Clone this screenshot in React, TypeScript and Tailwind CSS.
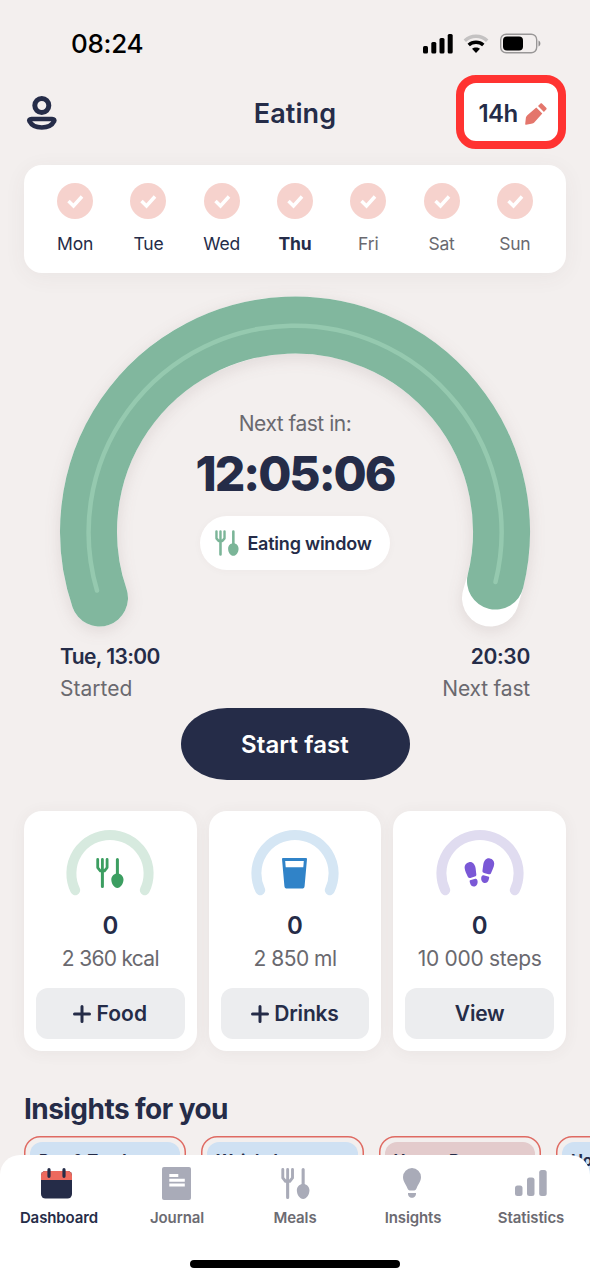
import React from "react";

const days = ["Mon", "Tue", "Wed", "Thu", "Fri", "Sat", "Sun"];

function Utensils({ className }: { className: string }) {
  return (
    <svg viewBox="0 0 28 30" className={className} fill="none" stroke="currentColor" strokeLinecap="round" strokeLinejoin="round">
      <path d="M1.700 1.400V9.600L4.300 12.800H8.500L11.100 9.600V1.400M6.400 1.400V12" strokeWidth="2.800" />
      <path d="M6.400 12v16.500M21.400 1.500V18" strokeWidth="3" />
      <path d="M21.400 15.400c3.300 0 6.100 2.600 6.100 6.200 0 4.200-2.800 8.400-6.100 8.400s-6.100-4.200-6.100-8.400c0-3.600 2.800-6.200 6.100-6.200z" fill="currentColor" stroke="none" />
    </svg>
  );
}

function Glass() {
  return (
    <svg viewBox="0 0 25 31" className="h-[31px] w-[25px]">
      <path d="M1 0h23a1 1 0 0 1 1 1.1L22.6 28a2.8 2.8 0 0 1-2.8 2.6H5.2A2.8 2.8 0 0 1 2.4 28L0 1.1A1 1 0 0 1 1 0z" fill="#3083c8" />
      <path d="M3.2 3h18.6l-.5 6.2H3.7z" fill="#fff" />
    </svg>
  );
}

function Steps() {
  return (
    <svg viewBox="0 0 31 30" className="h-[30px] w-[31px]" fill="#7a58d6">
      <path d="M5 4.2c3.4-.8 6 2 6.6 6 .3 2.300.4 3.800.7 5.800.2 1.500-.3 2.200-1.500 2.600l-4.400 1.300c-1.400.4-2.200 0-2.700-1.300C2.600 15.800.9 13.300.6 9.800.4 7 2.200 4.900 5 4.200z" />
      <path d="M6 22.300l5.300-1.600c1.300-.3 2.100.7 2.300 2.600.3 2.400-.8 4.600-2.900 5.200-2.200.5-3.800-.7-4.600-3.200-.4-1.300-.7-2.500-.1-3z" />
      <path d="M25.800.4c-3.400-.7-5.900 2.200-6.500 6.100-.3 2.300-.5 3.900-.8 5.900-.2 1.400.2 2.200 1.500 2.500l4.600 1.300c1.300.3 2.100-.1 2.600-1.400 1.100-3 2.700-5.500 3-8.900.2-2.900-1.600-5-4.400-5.500z" />
      <path d="M24.900 18.700l-5.400-1.500c-1.300-.3-2 .7-2.300 2.500-.3 2.500.8 4.600 2.900 5.200 2.200.5 3.800-.8 4.600-3.200.4-1.300.8-2.500.2-3z" />
    </svg>
  );
}

function Plus() {
  return (
    <svg viewBox="0 0 18 18" className="h-[18px] w-[18px]" stroke="currentColor" strokeWidth="3" strokeLinecap="round">
      <path d="M9 1.500v15M1.500 9h15" />
    </svg>
  );
}

interface StatProps {
  arc: string;
  goal: string;
  action: string;
  plus?: boolean;
  goalClass: string;
  actionClass: string;
  children: React.ReactNode;
}

function StatCard({ arc, goal, action, plus, goalClass, actionClass, children }: StatProps) {
  return (
    <section className="flex h-[240px] flex-col items-center rounded-[18px] bg-white px-3 pt-[18px] shadow-[0_2px_16px_rgba(90,60,60,0.06)]">
      <div className="grid h-[68px] w-[90px] place-items-center">
        <svg viewBox="0 0 90 68" className="col-start-1 row-start-1 h-[68px] w-[90px]" fill="none">
          <path d="M10.200 61.200A38.600 38.600 0 1 1 79.800 61.200" stroke={arc} strokeWidth="10" strokeLinecap="round" />
        </svg>
        <div className="col-start-1 row-start-1 pt-[20px]">{children}</div>
      </div>
      <p className="mt-[15px] h-[28px] text-[24px] leading-[28px] font-semibold">0</p>
      <p className={"mt-[5px] h-[28px] text-[21px] leading-[28px] whitespace-nowrap text-[#6a696f] " + goalClass}>{goal}</p>
      <button className="mt-[15px] flex h-[51px] w-full items-center justify-center gap-[5px] rounded-[12px] bg-[#ecedef]">
        {plus && <Plus />}
        <span className={"text-[21px] leading-[28px] font-semibold " + actionClass}>{action}</span>
      </button>
    </section>
  );
}

function FastingDial() {
  return (
    <section className="grid h-[350px] justify-items-center">
      <svg viewBox="0 0 590 350" className="col-start-1 row-start-1 h-[350px] w-[590px] drop-shadow-[0_4px_8px_rgba(90,60,60,0.12)]" fill="none" strokeLinecap="round">
        <path d="M99.500 315A206.500 206.500 0 1 1 490.500 315" stroke="#fff" strokeWidth="57" />
        <path d="M99.500 315A206.500 206.500 0 1 1 495.500 298" stroke="#81b79e" strokeWidth="57" />
        <path d="M97 307.500A206.500 206.500 0 1 1 495.500 299" stroke="#95c9af" strokeWidth="4.500" />
      </svg>
      <div className="col-start-1 row-start-1 flex flex-col items-center pt-[127px]">
        <p className="h-[28px] text-[21px] leading-[28px] tracking-[-0.500px] text-[#6a696f]">Next fast in:</p>
        <p className="mt-[8px] h-[56px] text-[48px] leading-[56px] font-extrabold tracking-[-2px]">12:05:06</p>
        <div className="mt-[14px] flex h-[54px] w-[190px] items-center justify-center rounded-full bg-white pr-[3px] shadow-[0_1px_8px_rgba(90,60,60,0.03)]">
          <Utensils className="h-[26px] w-[24px] text-[#7bb598]" />
          <span className="ml-[8px] text-[18px] font-semibold tracking-[-0.220px]">Eating window</span>
        </div>
      </div>
    </section>
  );
}

const insights = [
  { title: "Day & Track", bg: "bg-[#cfe1f3]", tracking: "" },
  { title: "Weight l", bg: "bg-[#cfe1f3]", tracking: "-tracking-[0.300px]" },
  { title: "How to Boost", bg: "bg-[#e3cbcc]", tracking: "tracking-[-0.400px]" },
  { title: "How", bg: "bg-[#cfe1f3]", tracking: "" },
];

function Tab({ label, active, children }: { label: string; active?: boolean; children: React.ReactNode }) {
  return (
    <a className={"flex flex-col items-center text-[15px] font-semibold tracking-[-0.100px] " + (active ? "text-[#252c48]" : "text-[#6c6b72]")}>
      <span className="flex h-[34px] items-center text-[#a9abb8]">{children}</span>
      <span className="mt-[8px] leading-[20px]">{label}</span>
    </a>
  );
}

export default function App() {
  return (
    <main className="relative h-[1280px] w-[590px] overflow-hidden bg-[#f3efee] font-['Inter',sans-serif] text-[#252c48]">
      <div className="flex h-[75px] items-center justify-between pt-[12px] pr-[49px] pl-[71px] text-black">
        <time className="text-[26px] leading-[32px] font-medium tracking-[-0.300px]">08:24</time>
        <svg viewBox="0 0 118 22" className="h-[22px] w-[118px]">
          <g>
            <rect x="0" y="13" width="5" height="7.500" rx="1.500" />
            <rect x="8.300" y="9" width="5" height="11.500" rx="1.500" />
            <rect x="16.500" y="5" width="5" height="15.500" rx="1.500" />
            <rect x="24.700" y="1" width="5" height="19.500" rx="1.500" />
          </g>
          <g fill="none" strokeWidth="3.500">
            <path d="M41.800 7.700a16.500 16.500 0 0 1 22.400 0" stroke="#c4c2c2" />
            <path d="M45.700 12a11 11 0 0 1 14.600 0" stroke="#000" />
          </g>
          <path d="M53 20l-4-4.200c2.300-1.800 5.700-1.800 8 0z" />
          <rect x="77.700" y="1.200" width="36" height="18.600" rx="5.500" fill="none" stroke="#999797" strokeWidth="1.400" />
          <rect x="80" y="3.500" width="20" height="14" rx="4" />
          <path d="M115.500 7.500c2.500 1 2.500 5 0 6z" fill="#8f8d8d" />
        </svg>
      </div>

      <header className="grid h-[74px] grid-cols-[110px_1fr_110px] items-center px-[24px]">
        <svg viewBox="0 0 36 36" className="mt-[3px] h-[36px] w-[36px]" fill="none" stroke="currentColor" strokeWidth="5">
          <circle cx="17.800" cy="9.500" r="7" />
          <path d="M7.500 23h20.600c2 0 2.700 1 2 2.300-2 4-6.700 6.200-12.300 6.200S7.500 29.300 5.500 25.300c-.7-1.300 0-2.300 2-2.300z" strokeWidth="4.600" />
        </svg>
        <h1 className="pt-[5px] text-center text-[27px] font-semibold tracking-[0.100px]">Eating</h1>
        <button className="flex h-[74px] w-[110px] items-center justify-center gap-[7px] rounded-[20px] border-[8px] border-[#ff3331] bg-white pt-[4px] pl-[3px]">
          <span className="text-[24px] font-semibold tracking-[-0.600px]">14h</span>
          <svg viewBox="0 0 22 22" className="h-[22px] w-[22px]" fill="#e4766c">
            <path d="M11.300 4.600l6 6-7.600 8.300c-.9 1-2 1.500-3.400 1.800L1 21.700c-.6.1-.9-.2-.8-.8L.8 15.400c.2-1.400.8-2.300 1.800-3.300z" />
            <path d="M13 3L15.300.700c.6-.6 1.300-.6 1.900 0l4 4c.6.6.6 1.300 0 1.900L18.900 8.900z" />
          </svg>
        </button>
      </header>

      <section className="mx-[24px] mt-[16px] grid h-[108px] grid-cols-7 rounded-[18px] bg-white px-[14.500px] pt-[18px] shadow-[0_4px_22px_rgba(90,60,60,0.06)]">
        {days.map((day, i) => (
          <div key={day} className="flex flex-col items-center">
            <svg viewBox="0 0 36 36" className="h-[36px] w-[36px]">
              <circle cx="18" cy="18" r="18" fill="#f6d2cd" />
              <path d="M11.500 18l5 5L25 13.500" fill="none" stroke="#fff" strokeWidth="3.500" />
            </svg>
            <span className={"mt-[12px] text-[17.500px] leading-[25px] tracking-[-0.200px] " + (i === 3 ? "font-bold" : i > 3 ? "text-[#6a696f]" : "")}>{day}</span>
          </div>
        ))}
      </section>

      <div className="mt-[10px]">
        <FastingDial />
      </div>

      <div className="mt-[8px] flex h-[67px] justify-between px-[60px] text-[21px] leading-[32px]">
        <div>
          <p className="font-semibold tracking-[-0.600px]">Tue, 13:00</p>
          <p className="text-[#6a696f]">Started</p>
        </div>
        <div className="text-right">
          <p className="font-semibold tracking-[-0.300px]">20:30</p>
          <p className="tracking-[-0.200px] text-[#6a696f]">Next fast</p>
        </div>
      </div>

      <button className="mx-auto block h-[72px] w-[229px] rounded-[46px/36px] bg-[#252c48] pt-[1px] text-[24px] font-semibold tracking-[0.100px] text-white">Start fast</button>

      <div className="mx-[24px] mt-[31px] grid grid-cols-3 gap-[12px]">
        <StatCard arc="#d7eadf" goal="2 360 kcal" action="Food" plus goalClass="tracking-[-0.700px]" actionClass="tracking-[0.100px]">
          <Utensils className="h-[30px] w-[28px] text-[#3c9e61]" />
        </StatCard>
        <StatCard arc="#d5e6f4" goal="2 850 ml" action="Drinks" plus goalClass="tracking-[-0.500px]" actionClass="tracking-[-0.200px]">
          <Glass />
        </StatCard>
        <StatCard arc="#e0dcf0" goal="10 000 steps" action="View" goalClass="tracking-[-0.300px]" actionClass="tracking-[-0.200px]">
          <Steps />
        </StatCard>
      </div>

      <h2 className="mt-[39px] ml-[24px] text-[28px] leading-[38px] font-bold tracking-[-0.550px]">Insights for you</h2>
      <div className="mt-[8px] ml-[24px] flex gap-[15px]">
        {insights.map((item) => (
          <article key={item.title} className="h-[150px] w-[162.300px] shrink-0 rounded-[16px] p-[6px] shadow-[inset_0_0_0_1.500px_#df6a62]">
            <div className={"h-full rounded-[12px] px-[9px] pt-[8px] text-[16px] leading-[20px] font-bold whitespace-nowrap " + item.bg + " " + item.tracking}>{item.title}</div>
          </article>
        ))}
      </div>

      <nav className="absolute inset-x-0 bottom-0 h-[125px] rounded-t-[20px] bg-white pt-[11px]">
        <div className="grid h-[94px] grid-cols-5">
          <Tab label="Dashboard" active>
            <svg viewBox="0 0 31 31" className="mr-[5px] h-[31px] w-[31px]">
              <rect y="3" width="31" height="27.500" rx="4.500" fill="#252c48" />
              <path d="M0 12V7.500A4.500 4.500 0 0 1 4.500 3h22A4.500 4.500 0 0 1 31 7.500V12z" fill="#ed6a5e" />
              <path d="M8 1.700v6.600M23 1.700v6.600" stroke="#252c48" strokeWidth="3.200" strokeLinecap="round" />
            </svg>
          </Tab>
          <Tab label="Journal">
            <svg viewBox="0 0 29 33" className="mr-[1px] h-[33px] w-[29px]">
              <rect width="29" height="33" rx="2" fill="currentColor" />
              <path d="M7.300 7h9v3h-9zM7.300 11.700h15.500v3H7.300zM7.300 16.400h15.500v3H7.300z" fill="#fff" />
            </svg>
          </Tab>
          <Tab label="Meals">
            <Utensils className="h-[31px] w-[29px]" />
          </Tab>
          <Tab label="Insights">
            <svg viewBox="0 0 18 30" className="mr-[2px] h-[30px] w-[18px]" fill="currentColor">
              <path d="M9 0a9 9 0 0 1 9 9c0 4.500-2.600 6.800-4.200 10.800C13 21.700 12.400 22.500 11.200 22.500H6.800c-1.200 0-1.800-.8-2.600-2.700C2.600 15.800 0 13.500 0 9a9 9 0 0 1 9-9zM5 25h8c.2 2.700-1.600 4.800-4 4.800S4.800 27.700 5 25z" />
            </svg>
          </Tab>
          <Tab label="Statistics">
            <svg viewBox="0 0 32 26" className="h-[26px] w-[32px]" fill="currentColor">
              <rect y="15.500" width="7.500" height="10.500" rx="2.500" />
              <rect x="12" y="7.500" width="7.500" height="18.500" rx="2.500" />
              <rect x="24.200" width="7.500" height="26" rx="2.500" />
            </svg>
          </Tab>
        </div>
        <div className="mx-auto h-[8px] w-[210px] rounded-full bg-black" />
      </nav>
    </main>
  );
}
